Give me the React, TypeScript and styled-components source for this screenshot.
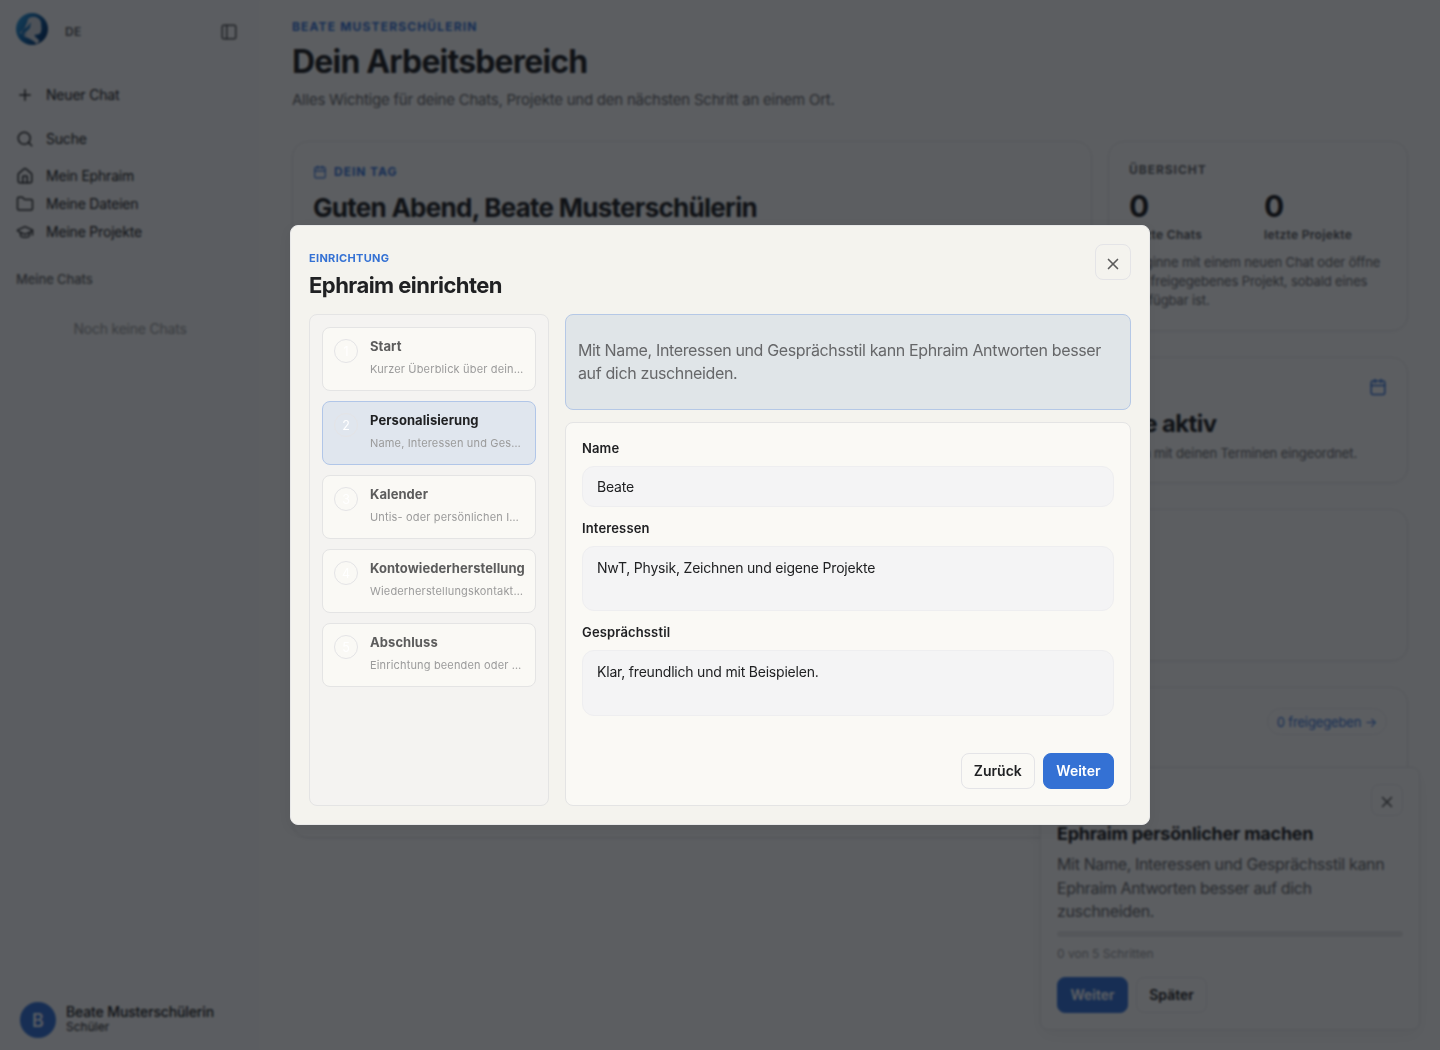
import React from "react";
import styled, { createGlobalStyle } from "styled-components";
import { PanelLeft, Plus, Search, House, Folder, GraduationCap, Calendar, X } from "lucide-react";

const Global = createGlobalStyle`
  * { box-sizing: border-box; }
  html, body, #root { height: 100%; }
  body { margin: 0; overflow: hidden; font-family: Inter, "Liberation Sans", sans-serif; color: #202123; background: #fafafa; }
  h1, h2, p { margin: 0; }
  button, input, textarea { font: inherit; color: inherit; }
`;

const Shell = styled.div`
  display: flex;
  height: 1050px;
  overflow: hidden;
`;

const Sidebar = styled.aside`
  width: 260px;
  flex: none;
  display: flex;
  flex-direction: column;
  background: #f7f7f8;
`;

const Brand = styled.div`
  display: flex;
  align-items: center;
  height: 62px;
  padding: 0 22px 0 16px;
  svg.logo { margin-top: -4px; }
  svg.panel { margin-left: auto; color: #505154; margin-top: 2px; }
`;

const Lang = styled.span`
  margin-left: 17px;
  font-size: 12px;
  font-weight: 600;
  letter-spacing: 0.3px;
  color: #55565a;
`;

const Nav = styled.nav`
  display: flex;
  flex-direction: column;
  padding: 19px 16px 0;
`;

const NavItem = styled.a<{ $after?: number }>`
  display: flex;
  align-items: center;
  gap: 12px;
  height: 28px;
  margin-bottom: ${(p) => p.$after ?? 0}px;
  font-size: 14px;
  letter-spacing: -0.2px;
  line-height: 18px;
  svg { flex: none; color: #2b2c2f; }
`;

const SectionLabel = styled.div`
  padding: 25px 16px 0;
  font-size: 13px;
  line-height: 17px;
  font-weight: 500;
  letter-spacing: -0.1px;
  color: #66676a;
`;

const Empty = styled.div`
  margin-top: 32px;
  text-align: center;
  font-size: 14px;
  line-height: 18px;
  letter-spacing: -0.22px;
  color: #96979a;
`;

const User = styled.div`
  margin-top: auto;
  display: flex;
  align-items: center;
  gap: 10px;
  padding: 0 20px 12px;
`;

const Avatar = styled.div`
  width: 36px;
  height: 36px;
  border-radius: 50%;
  background: #3471d4;
  color: #fff;
  display: grid;
  place-items: center;
  font-size: 18px;
  font-weight: 500;
`;

const UserText = styled.div`
  padding-bottom: 2px;
`;

const UserName = styled.div`
  font-size: 14px;
  line-height: 16px;
  font-weight: 500;
  letter-spacing: -0.14px;
`;

const UserRole = styled.div`
  font-size: 12px;
  line-height: 14px;
`;

const Main = styled.main`
  flex: 1;
  min-width: 0;
  padding: 19px 32px;
  display: flex;
  flex-direction: column;
`;

const Kicker = styled.div<{ $muted?: boolean; $spacing?: number; $line?: number }>`
  display: flex;
  align-items: center;
  gap: 7px;
  font-size: 12px;
  line-height: ${(p) => p.$line ?? 15}px;
  font-weight: 700;
  letter-spacing: ${(p) => p.$spacing ?? 0.96}px;
  text-transform: uppercase;
  color: ${(p) => (p.$muted ? "#66676a" : "#3471d4")};
`;

const PageTitle = styled.h1`
  margin-top: 9px;
  font-size: 32px;
  line-height: 38px;
  font-weight: 700;
  letter-spacing: -0.82px;
`;

const Lead = styled.p`
  margin-top: 9px;
  font-size: 15px;
  line-height: 20px;
  letter-spacing: -0.24px;
  color: #66676a;
`;

const Cards = styled.div`
  margin-top: 31px;
  display: flex;
  flex-direction: column;
  gap: 26px;
`;

const TopRow = styled.div`
  display: grid;
  grid-template-columns: 800px 300px;
  gap: 16px;
`;

const Card = styled.section<{ $h: number }>`
  height: ${(p) => p.$h}px;
  border: 1px solid #e2e2e5;
  border-radius: 16px;
  background: #fafafa;
  padding: 20px;
  box-shadow: 0 2px 6px rgba(0, 0, 0, 0.03);
`;

const Greeting = styled.h2`
  margin-top: 11px;
  font-size: 26px;
  line-height: 32px;
  font-weight: 700;
  letter-spacing: -0.73px;
`;

const Stats = styled.div`
  display: grid;
  grid-template-columns: 1fr 1fr;
  gap: 12px;
  margin-top: 10px;
`;

const StatValue = styled.div`
  font-size: 30px;
  line-height: 38px;
  font-weight: 700;
`;

const StatLabel = styled.div`
  margin-top: 2px;
  font-size: 12px;
  line-height: 15px;
  font-weight: 600;
  letter-spacing: 0.32px;
  color: #55565a;
`;

const Small = styled.p`
  margin-top: 11px;
  font-size: 13px;
  line-height: 19px;
  letter-spacing: -0.11px;
  color: #66676a;
`;

const CardHead = styled.div`
  display: flex;
  justify-content: flex-end;
  color: #3471d4;
`;

const SideText = styled.div`
  margin-left: 730px;
  width: 350px;
`;

const SideTitle = styled.h2`
  margin-top: 13px;
  font-size: 24px;
  line-height: 30px;
  font-weight: 700;
  letter-spacing: -0.6px;
  padding-left: 22px;
  white-space: nowrap;
`;

const SideNote = styled(Small)`
  margin-top: 5px;
  white-space: nowrap;
  text-align: right;
  padding-right: 37px;
`;

const Pill = styled.span`
  display: inline-flex;
  align-items: center;
  height: 27px;
  padding: 0 9px;
  border: 1px solid #e4e4e8;
  border-radius: 14px;
  font-size: 13px;
  letter-spacing: -0.14px;
`;

const Toast = styled.aside`
  position: absolute;
  right: 20px;
  bottom: 20px;
  width: 380px;
  height: 263px;
  border: 1px solid #e2e2e5;
  border-radius: 8px;
  padding: 16px;
  background: #fafafa;
  box-shadow: 0 6px 18px rgba(0, 0, 0, 0.05);
  display: flex;
  flex-direction: column;
`;

const IconButton = styled.button<{ $size: number }>`
  width: ${(p) => p.$size}px;
  height: ${(p) => p.$size}px;
  display: grid;
  place-items: center;
  padding: 3px 0 0;
  margin-left: auto;
  flex: none;
  background: transparent;
  border: 1px solid #e4e4e7;
  border-radius: 8px;
  color: #5c5c5c;
`;

const ToastTitle = styled.h2`
  margin-top: 6px;
  font-size: 18px;
  line-height: 23px;
  font-weight: 700;
  letter-spacing: -0.24px;
`;

const ToastText = styled.p`
  margin-top: 8px;
  font-size: 16px;
  line-height: 23.5px;
  letter-spacing: -0.35px;
  color: #66676a;
`;

const Track = styled.div`
  flex: none;
  margin-top: 7px;
  height: 6px;
  border-radius: 3px;
  background: #e4e4e6;
`;

const Progress = styled.div`
  margin-top: 9px;
  font-size: 12px;
  line-height: 16px;
  color: #96979a;
`;

const Actions = styled.div<{ $end?: boolean }>`
  display: flex;
  gap: 8px;
  justify-content: ${(p) => (p.$end ? "flex-end" : "flex-start")};
  margin-top: ${(p) => (p.$end ? "auto" : "15px")};
`;

const Button = styled.button<{ $primary?: boolean }>`
  height: 36px;
  padding: 0 ${(p) => (p.$primary ? 12.5 : 12)}px 1px;
  font-size: 14px;
  font-weight: 600;
  border-radius: 8px;
  border: 1px solid ${(p) => (p.$primary ? "#3471d4" : "#e4e4e7")};
  background: ${(p) => (p.$primary ? "#3471d4" : "transparent")};
  color: ${(p) => (p.$primary ? "#fff" : "#202123")};
`;

const Overlay = styled.div`
  position: fixed;
  inset: 0;
  display: grid;
  place-items: center;
  background: rgba(7, 10, 16, 0.65);
  backdrop-filter: blur(1px);
`;

const Dialog = styled.div`
  width: 860px;
  height: 600px;
  border: 1px solid #e8e8e8;
  border-radius: 8px;
  background: #f4f3ee;
  padding: 18px;
  box-shadow: 0 4px 14px rgba(0, 0, 0, 0.05);
  display: flex;
  flex-direction: column;
`;

const DialogHead = styled.header`
  display: flex;
  height: 70px;
  flex: none;
`;

const Eyebrow = styled.div`
  margin-top: 7px;
  font-size: 11px;
  line-height: 14px;
  font-weight: 700;
  letter-spacing: 0.32px;
  color: #3471d4;
`;

const DialogTitle = styled.h2`
  margin-top: 6px;
  font-size: 22px;
  line-height: 28px;
  font-weight: 700;
  letter-spacing: -0.54px;
`;

const DialogBody = styled.div`
  flex: 1;
  display: grid;
  grid-template-columns: 240px 1fr;
  gap: 16px;
`;

const Steps = styled.div`
  display: flex;
  flex-direction: column;
  gap: 10px;
  padding: 12px;
  border: 1px solid #e4e4e4;
  border-radius: 8px;
  background: #f4f3f1;
`;

const Step = styled.div<{ $active: boolean }>`
  display: flex;
  gap: 12px;
  height: 64px;
  padding: 11px 0 11px 11px;
  border: 1px solid ${(p) => (p.$active ? "#b1c6e8" : "#e4e4e4")};
  border-radius: 8px;
  background: ${(p) => (p.$active ? "#e0e6ee" : "#faf9f5")};
`;

const StepNumber = styled.span`
  flex: none;
  width: 24px;
  height: 24px;
  border: 1px solid #e4e4e6;
  border-radius: 50%;
  display: grid;
  place-items: center;
  font-size: 12.5px;
  color: #fff;
`;

const StepText = styled.div`
  min-width: 0;
  flex: 1;
  margin-top: -1px;
`;

const StepName = styled.div<{ $active: boolean }>`
  font-size: 13px;
  line-height: 16px;
  font-weight: 700;
  letter-spacing: 0.07px;
  white-space: nowrap;
  color: ${(p) => (p.$active ? "#202123" : "#5c5c5c")};
`;

const StepHint = styled.div`
  margin-top: 8px;
  font-size: 11px;
  line-height: 14px;
  letter-spacing: 0.16px;
  white-space: nowrap;
  color: #9b9b9b;
`;

const Content = styled.div`
  display: flex;
  flex-direction: column;
  gap: 12px;
`;

const Notice = styled.div`
  height: 96px;
  display: flex;
  align-items: center;
  padding: 0 12px;
  border: 1px solid #b5c8e6;
  border-radius: 8px;
  background: #e0e5e8;
  font-size: 16px;
  line-height: 23.2px;
  letter-spacing: -0.36px;
  color: #666769;
`;

const Form = styled.form`
  flex: 1;
  display: flex;
  flex-direction: column;
  padding: 16px;
  border: 1px solid #e4e4e4;
  border-radius: 8px;
  background: #faf9f5;
`;

const Field = styled.label`
  display: flex;
  flex-direction: column;
  gap: 8px;
  margin-bottom: 12px;
  font-size: 13px;
  line-height: 19px;
  font-weight: 600;
  letter-spacing: 0.14px;
`;

const Input = styled.input`
  height: 41px;
  padding: 0 14px;
  font-size: 14px;
  font-weight: 400;
  letter-spacing: -0.2px;
  border: 1px solid #eeeef0;
  border-radius: 12px;
  background: #f4f4f5;
`;

const TextArea = styled.textarea<{ $h: number }>`
  height: ${(p) => p.$h}px;
  padding: 11px 14px;
  font-size: 14px;
  line-height: 20px;
  font-weight: 400;
  letter-spacing: -0.2px;
  border: 1px solid #eeeef0;
  border-radius: 12px;
  background: #f4f4f5;
  resize: none;
`;

const steps = [
  ["Start", "Kurzer Überblick über dein…"],
  ["Personalisierung", "Name, Interessen und Ges…"],
  ["Kalender", "Untis- oder persönlichen I…"],
  ["Kontowiederherstellung", "Wiederherstellungskontakt…"],
  ["Abschluss", "Einrichtung beenden oder …"],
];

const Logo = () => (
  <svg className="logo" width="32" height="32" viewBox="0 0 32 32">
    <defs>
      <linearGradient id="brand" x1="0" y1="0" x2="1" y2="0.6">
        <stop offset="0" stopColor="#36a8e8" />
        <stop offset="0.5" stopColor="#1267ad" />
        <stop offset="1" stopColor="#06366f" />
      </linearGradient>
    </defs>
    <circle cx="16" cy="16" r="16" fill="url(#brand)" />
    <path d="M12 6c4-4 11-2 12.500 2 1 3 .5 5 1 8l-1 4c-2 2-4 1-6 2 0 2 4 4 5 6l-3 3c-3-4-9-6-13-8l4-2c-3 1-6 0-8-1 4-3 7-7 8.500-14Z" fill="#d2d8e0" />
    <path d="M5 21c1-4 3-6 6-7l4-5-1 6-3 3-3 3Z" fill="#1e74b8" />
  </svg>
);

export default function App() {
  return (
    <>
      <Global />
      <Shell>
        <Sidebar>
          <Brand>
            <Logo />
            <Lang>DE</Lang>
            <PanelLeft className="panel" size={18} />
          </Brand>
          <Nav>
            <NavItem $after={16}><Plus size={18} />Neuer Chat</NavItem>
            <NavItem $after={9}><Search size={18} />Suche</NavItem>
            <NavItem><House size={18} />Mein Ephraim</NavItem>
            <NavItem><Folder size={18} />Meine Dateien</NavItem>
            <NavItem><GraduationCap size={18} />Meine Projekte</NavItem>
          </Nav>
          <SectionLabel>Meine Chats</SectionLabel>
          <Empty>Noch keine Chats</Empty>
          <User>
            <Avatar>B</Avatar>
            <UserText>
              <UserName>Beate Musterschülerin</UserName>
              <UserRole>Schüler</UserRole>
            </UserText>
          </User>
        </Sidebar>
        <Main>
          <Kicker $spacing={1.16}>Beate Musterschülerin</Kicker>
          <PageTitle>Dein Arbeitsbereich</PageTitle>
          <Lead>Alles Wichtige für deine Chats, Projekte und den nächsten Schritt an einem Ort.</Lead>
          <Cards>
            <TopRow>
              <Card $h={190}>
                <Kicker $line={19}><Calendar size={14} />Dein Tag</Kicker>
                <Greeting>Guten Abend, Beate Musterschülerin</Greeting>
              </Card>
              <Card $h={190}>
                <Kicker $muted>Übersicht</Kicker>
                <Stats>
                  <div><StatValue>0</StatValue><StatLabel>letzte Chats</StatLabel></div>
                  <div><StatValue>0</StatValue><StatLabel>letzte Projekte</StatLabel></div>
                </Stats>
                <Small>Beginne mit einem neuen Chat oder öffne ein freigegebenes Projekt, sobald eines verfügbar ist.</Small>
              </Card>
            </TopRow>
            <Card $h={126}>
              <CardHead><Calendar size={18} /></CardHead>
              <SideText>
                <SideTitle>Termine aktiv</SideTitle>
                <SideNote>Aufgaben werden mit deinen Terminen eingeordnet.</SideNote>
              </SideText>
            </Card>
            <Card $h={152} />
            <Card $h={151}>
              <CardHead><Pill>0 freigegeben →</Pill></CardHead>
            </Card>
          </Cards>
        </Main>
        <Toast>
          <IconButton $size={32}><X size={18} strokeWidth={2.2} /></IconButton>
          <ToastTitle>Ephraim persönlicher machen</ToastTitle>
          <ToastText>Mit Name, Interessen und Gesprächsstil kann Ephraim Antworten besser auf dich zuschneiden.</ToastText>
          <Track />
          <Progress>0 von 5 Schritten</Progress>
          <Actions><Button $primary>Weiter</Button><Button>Später</Button></Actions>
        </Toast>
      </Shell>
      <Overlay>
        <Dialog role="dialog">
          <DialogHead>
            <div>
              <Eyebrow>EINRICHTUNG</Eyebrow>
              <DialogTitle>Ephraim einrichten</DialogTitle>
            </div>
            <IconButton $size={36} aria-label="Schließen"><X size={18} strokeWidth={2.2} /></IconButton>
          </DialogHead>
          <DialogBody>
            <Steps>
              {steps.map(([name, hint], i) => (
                <Step key={name} $active={i === 1}>
                  <StepNumber>{i + 1}</StepNumber>
                  <StepText>
                    <StepName $active={i === 1}>{name}</StepName>
                    <StepHint>{hint}</StepHint>
                  </StepText>
                </Step>
              ))}
            </Steps>
            <Content>
              <Notice>Mit Name, Interessen und Gesprächsstil kann Ephraim Antworten besser auf dich zuschneiden.</Notice>
              <Form>
                <Field>Name<Input defaultValue="Beate" /></Field>
                <Field>Interessen<TextArea $h={65} defaultValue="NwT, Physik, Zeichnen und eigene Projekte" /></Field>
                <Field>Gesprächsstil<TextArea $h={66} defaultValue="Klar, freundlich und mit Beispielen." /></Field>
                <Actions $end>
                  <Button type="button">Zurück</Button>
                  <Button type="button" $primary>Weiter</Button>
                </Actions>
              </Form>
            </Content>
          </DialogBody>
        </Dialog>
      </Overlay>
    </>
  );
}
